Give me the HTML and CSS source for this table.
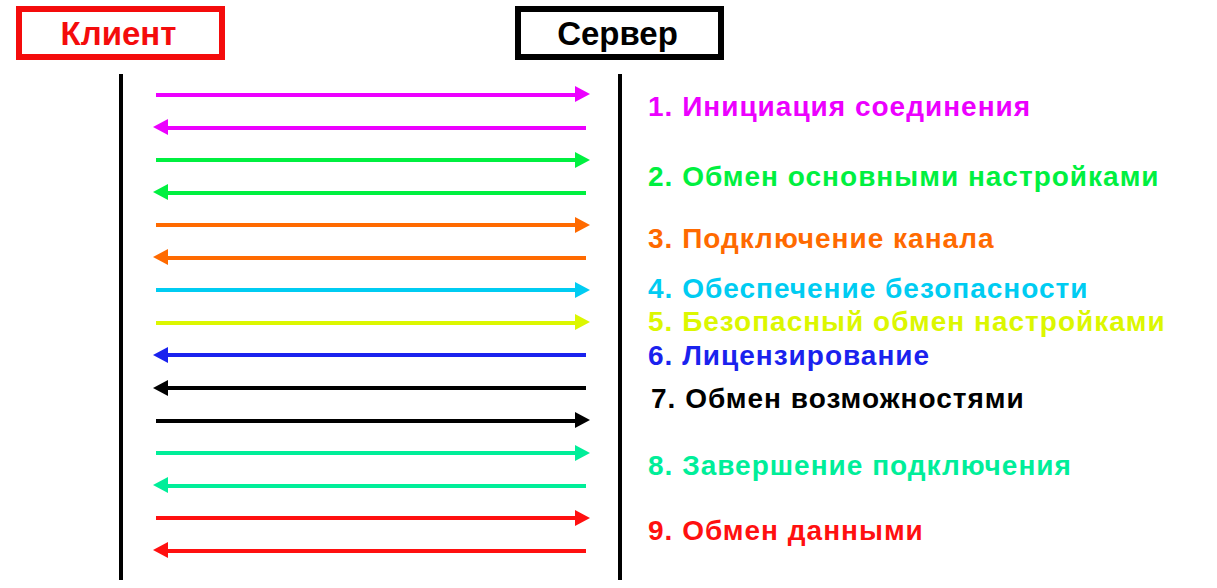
FILE: index.html
```html
<!DOCTYPE html>
<html lang="ru">
<head>
<meta charset="utf-8">
<title>Клиент – Сервер</title>
<link rel="stylesheet" href="styles.css">
</head>
<body>
<div class="page">
  <header class="heads">
    <div class="box box-client">Клиент</div>
    <div class="box box-server">Сервер</div>
  </header>
  <main class="diagram">
    <div class="lifeline lifeline-left"></div>
    <div class="arrows">
      <div class="row c-magenta"><div class="arrow r"></div></div>
      <div class="row c-magenta"><div class="arrow l"></div></div>
      <div class="row c-green"><div class="arrow r"></div></div>
      <div class="row c-green"><div class="arrow l"></div></div>
      <div class="row c-orange"><div class="arrow r"></div></div>
      <div class="row c-orange"><div class="arrow l"></div></div>
      <div class="row c-cyan"><div class="arrow r"></div></div>
      <div class="row c-yellow"><div class="arrow r"></div></div>
      <div class="row c-blue"><div class="arrow l"></div></div>
      <div class="row c-black"><div class="arrow l"></div></div>
      <div class="row c-black"><div class="arrow r"></div></div>
      <div class="row c-teal"><div class="arrow r"></div></div>
      <div class="row c-teal"><div class="arrow l"></div></div>
      <div class="row c-red"><div class="arrow r"></div></div>
      <div class="row c-red"><div class="arrow l"></div></div>
    </div>
    <div class="lifeline lifeline-right"></div>
    <ol class="labels">
      <li class="label c-magenta s1">1. Инициация соединения</li>
      <li class="label c-green s2">2. Обмен основными настройками</li>
      <li class="label c-orange s3">3. Подключение канала</li>
      <li class="label c-cyan s4">4. Обеспечение безопасности</li>
      <li class="label c-yellow s5">5. Безопасный обмен настройками</li>
      <li class="label c-blue s6">6. Лицензирование</li>
      <li class="label c-black s7">7. Обмен возможностями</li>
      <li class="label c-teal s8">8. Завершение подключения</li>
      <li class="label c-red s9">9. Обмен данными</li>
    </ol>
  </main>
</div>
</body>
</html>
```

FILE: styles.css
```css
html, body {
  margin: 0;
  padding: 0;
  background: #ffffff;
}

body {
  font-family: "Liberation Sans", Arial, sans-serif;
  font-weight: bold;
}

.page {
  width: 1217px;
  height: 588px;
  overflow: hidden;
}

.heads {
  display: flex;
  padding: 6px 0 0 16px;
}

.box {
  box-sizing: border-box;
  width: 209px;
  height: 54px;
  border: 6px solid;
  display: flex;
  align-items: center;
  justify-content: center;
  font-size: 33px;
  padding-right: 4px;
  padding-top: 1px;
}

.box-client {
  border-color: #f40c0c;
  color: #f40c0c;
}

.box-server {
  margin-left: 290px;
  border-color: #000000;
  color: #000000;
}

.diagram {
  display: flex;
  margin-top: 14px;
  height: 506px;
}

.lifeline {
  width: 4px;
  background: #000000;
}

.lifeline-left {
  margin-left: 119px;
}

.arrows {
  width: 495px;
  display: flex;
  flex-direction: column;
  padding-top: 4.7px;
}

.row {
  height: 32.57px;
  display: flex;
  align-items: center;
}

.arrow {
  position: relative;
  height: 4px;
  background: currentColor;
}

.arrow.r {
  margin-left: 33px;
  width: 419px;
}

.arrow.r::after {
  content: "";
  position: absolute;
  right: -15px;
  top: -6.5px;
  border-left: 15px solid currentColor;
  border-top: 8.5px solid transparent;
  border-bottom: 8.5px solid transparent;
}

.arrow.l {
  margin-left: 45px;
  width: 418px;
}

.arrow.l::before {
  content: "";
  position: absolute;
  left: -15px;
  top: -6.5px;
  border-right: 15px solid currentColor;
  border-top: 8.5px solid transparent;
  border-bottom: 8.5px solid transparent;
}

.labels {
  list-style: none;
  margin: 0;
  padding: 0 0 0 26px;
  display: flex;
  flex-direction: column;
}

.label {
  font-size: 28px;
  line-height: 28px;
  height: 28px;
  letter-spacing: 1px;
  white-space: nowrap;
}

.s1 { margin-top: 19.4px; }
.s2 { margin-top: 42px; }
.s3 { margin-top: 34px; }
.s4 { margin-top: 22px; }
.s5 { margin-top: 5px; }
.s6 { margin-top: 6px; }
.s7 { margin-top: 15px; padding-left: 3px; }
.s8 { margin-top: 39px; }
.s9 { margin-top: 37px; }

.c-magenta { color: #ec00ff; }
.c-green   { color: #00f040; }
.c-orange  { color: #ff6a00; }
.c-cyan    { color: #00ccf2; }
.c-yellow  { color: #dcf700; }
.c-blue    { color: #1a22ee; }
.c-black   { color: #000000; }
.c-teal    { color: #00ee99; }
.c-red     { color: #ff1010; }
```
